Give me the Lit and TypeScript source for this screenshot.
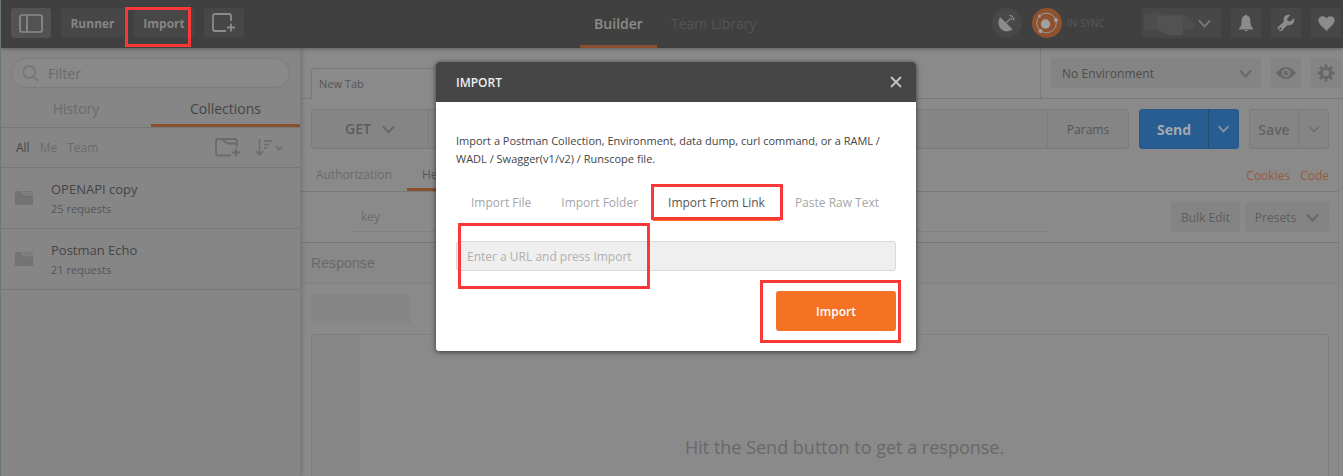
import { LitElement, html, css, svg } from "lit";
import { customElement } from "lit/decorators.js";

const chevron = (w: number, h: number, sw = 2) => html`<svg class="chev" width=${w} height=${h} viewBox="0 0 12 8" fill="none" stroke="currentColor" stroke-width=${sw}><path d="M.8 1.2L6 6.6L11.200 1.2" /></svg>`;

const folder = html`<svg width="18" height="14" viewBox="0 0 18 14" fill="#737373"><path d="M0 0H5.500L9 4.300H18V14H0Z" /><path d="M7.300 0H18V1H8.100ZM8.500 1.700H18V3.300H9.800Z" fill="#777" /></svg>`;

const gearTeeth = [0, 45, 90, 135, 180, 225, 270, 315];

@customElement("app-root")
export class AppRoot extends LitElement {
  static styles = css`
    :host { display: block; width: 1343px; height: 476px; overflow: hidden; position: relative; font-family: "Open Sans", sans-serif; font-size: 12px; color: #494949; background: #8a8a8a; border-left: 1px solid #6b7a70; box-sizing: border-box; }
    * { box-sizing: border-box; }
    svg { display: block; flex: none; }
    .t { white-space: nowrap; line-height: 20px; flex: none; }
    .app { display: flex; flex-direction: column; height: 476px; }
    .top { height: 48px; flex: none; display: flex; background: #404040; padding: 8px 0 0 10px; box-shadow: 0 1px 4px #0000004d; position: relative; z-index: 1; color: #8b8b8b; }
    .hb { height: 30px; border-radius: 3px; background: #474747; display: flex; align-items: center; justify-content: center; margin-right: 10px; flex: none; font-size: 12px; font-weight: 700; color: #858585; }
    .hb .t { padding-top: 1px; }
    .w40 { width: 40px; } .w30 { width: 30px; } .w60 { width: 60px; } .w63 { width: 63px; }
    .on { background: #525252; }
    .tabs { display: flex; margin: 0 0 0 326px; height: 40px; flex: none; }
    .tab { width: 77px; height: 40px; border-bottom: 3px solid #8a4f2f; text-align: center; font-size: 14px; font-weight: 600; line-height: 32px; }
    .lib { font-size: 14px; line-height: 32px; color: #545454; margin-left: 14px; width: 92px; white-space: nowrap; }
    .status { display: flex; align-items: center; height: 30px; margin-left: 229px; width: 150px; flex: none; }
    .sync { font-size: 10px; color: #585858; margin-left: 5px; }
    .circ { margin-right: 10px; }
    .user { width: 79px; padding: 0 10px 0 2px; justify-content: space-between; }
    .user .chev { color: #777; }
    .body { display: flex; flex: 1; min-height: 0; }
    .side { width: 300px; flex: none; background: #868686; border-right: 1px solid #7c7c7c; box-shadow: 0 0 5px #00000040; position: relative; }
    .filter { margin: 10px 10px 0; width: 279px; height: 30px; border: 1px solid #7c7c7c; border-radius: 15px; background: #898989; display: flex; align-items: center; padding-left: 10px; gap: 9px; font-size: 14px; color: #6b6b6b; }
    .filter .t { padding-top: 2px; }
    .stabs { display: flex; height: 40px; border-bottom: 1px solid #787878; font-size: 14px; text-align: center; color: #6b6b6b; line-height: 41px; }
    .stabs div { width: 150px; height: 39px; }
    .stabs .cur { color: #454545; border-bottom: 3px solid #8a4f2f; width: 149px; }
    .scope { display: flex; align-items: center; height: 40px; border-bottom: 1px solid #787878; padding-left: 15px; color: #6b6b6b; }
    .dark { color: #454545; }
    .scope .t { margin-right: 10px; padding-top: 1px; }
    .newf { margin-left: 107px; margin-right: 14px; }
    .item { height: 61px; border-bottom: 1px solid #787878; display: flex; padding: 11px 0 0 14px; gap: 18px; }
    .item svg { margin-top: 12px; }
    .name { font-size: 13px; line-height: 20px; color: #454545; }
    .cnt { font-size: 11px; line-height: 20px; color: #555; }
    .main { flex: 1; min-width: 0; display: flex; flex-direction: column; background: #8a8a8a; }
    .strip { height: 51px; display: flex; border-bottom: 1px solid #797979; flex: none; }
    .ntab { margin: 20px 0 -1px 10px; width: 200px; height: 31px; border: 1px solid #797979; border-bottom: 0; border-radius: 3px 3px 0 0; background: #8a8a8a; padding: 7px 7px; font-size: 11px; color: #555; }
    .env { margin-left: auto; width: 303px; border-left: 1px solid #797979; display: flex; padding: 10px 0 0 10px; flex: none; }
    .soft { background: #848484; border-radius: 3px; display: flex; align-items: center; justify-content: center; height: 30px; margin-right: 10px; flex: none; color: #6a6a6a; }
    .soft .chev, .grp .chev { color: #686868; }
    .sel { width: 210px; justify-content: space-between; padding: 0 9px 0 11px; font-size: 12px; color: #4d4d4d; }
    .sel .t { padding-top: 1px; letter-spacing: .05px; }
    .pane { width: 1038px; border-right: 1px solid #828282; flex: 1; display: flex; flex-direction: column; }
    .req { display: flex; padding: 10px 0 0 10px; height: 50px; flex: none; }
    .grp { display: flex; height: 40px; border: 1px solid #7b7b7b; border-radius: 3px; background: #858585; margin-right: 10px; flex: none; }
    .cell { display: flex; align-items: center; justify-content: center; flex: none; }
    .bl { border-left: 1px solid #7b7b7b; }
    .get { width: 116px; font-size: 14px; font-weight: 600; color: #5d5d5d; gap: 11px; }
    .url { width: 619px; } .par { width: 81px; color: #555; }
    .grp.blue { background: #285d92; border-color: #28588a; color: #a3a9b0; }
    .grp.blue .chev { color: #8a949e; }
    .snd { width: 68px; font-size: 14px; font-weight: 700; }
    .grp .da { width: 30px; border-color: #22496f; }
    .da2 { width: 30px; }
    .sv { width: 48px; font-size: 14px; font-weight: 600; color: #626262; }
    .rt { display: flex; height: 43px; border-bottom: 1px solid #797979; padding: 16px 9px 0 15px; color: #6b6b6b; flex: none; }
    .hd { margin-left: 15px; padding-left: 15px; width: 90px; height: 26px; border-bottom: 3px solid #8a4f2f; color: #555; }
    .lnk { color: #985c3b; margin-left: 10px; line-height: 20px; padding-top: 1px; }
    .push { margin-left: auto; }
    .kv { display: flex; height: 51px; border-bottom: 1px solid #757575; padding: 10px 0 0 50px; flex: none; }
    .key { width: 699px; height: 30px; border-bottom: 1px solid #7f7f7f; padding: 6px 10px; color: #6b6b6b; flex: none; }
    .bulk { margin-left: 121px; width: 69px; margin-right: 5px; color: #5d5d5d; }
    .pre { width: 84px; gap: 10px; color: #5d5d5d; margin-right: 0; }
    .resp { height: 41px; border-bottom: 1px solid #818181; padding: 10px; font: 14px/20px "Liberation Sans", sans-serif; letter-spacing: .1px; color: #686868; background: #888; flex: none; }
    .chip { width: 100px; height: 30px; border-radius: 3px; background: #868686; margin: 10px 0 10px 10px; flex: none; }
    .out { margin-left: 10px; width: 1018px; border: 1px solid #7f7f7f; border-bottom: 0; border-radius: 3px 3px 0 0; flex: 1; display: flex; }
    .gut { width: 48px; background: #878787; flex: none; }
    .hit { flex: 1; font-size: 18px; color: #686868; padding: 100px 0 0 325px; line-height: 24px; white-space: nowrap; }
    .modal { position: absolute; z-index: 2; left: 435px; top: 62px; width: 480px; height: 289px; background: #fff; border-radius: 3px; box-shadow: 0 1px 5px #000000a0; overflow: hidden; }
    .mh { height: 40px; background: #464646; display: flex; align-items: center; justify-content: space-between; padding: 0 14px 0 20px; color: #f0f0f0; font-weight: 600; font-size: 12px; }
    .mb { padding: 30px 20px 0; color: #444; }
    .copy { font-size: 11px; line-height: 18px; white-space: nowrap; }
    .mt { display: flex; margin-top: 14px; height: 39px; color: #a6a6a6; font-size: 12px; }
    .mt div { padding: 11px 15px 0; height: 39px; line-height: 20px; white-space: nowrap; }
    .mt .sel2 { color: #555; border-bottom: 3px solid #f47023; }
    .inp { height: 30px; margin-top: 20px; border: 1px solid #d9d9d9; border-radius: 3px; background: #efefef; color: #b0b0b0; padding: 5px 10px; line-height: 20px; font-size: 12px; }
    .go { margin: 20px 0 0 auto; width: 120px; height: 40px; border-radius: 3px; background: #f57123; color: #fff; font-weight: 600; display: flex; align-items: center; justify-content: center; }
    .mark { position: absolute; z-index: 3; border: 3px solid #fb3838; }
    .m1 { left: 124px; top: 7px; width: 66px; height: 40px; }
    .m2 { left: 650px; top: 184px; width: 132px; height: 36px; }
    .m3 { left: 457px; top: 223px; width: 192px; height: 66px; }
    .m4 { left: 759px; top: 280px; width: 141px; height: 63px; }
  `;

  header() {
    return html`<div class="top">
      <div class="hb w40 on"><svg width="24" height="19" viewBox="0 0 24 19" fill="none" stroke="#8b8b8b" stroke-width="1.7"><rect x="1" y="1" width="22" height="17" rx="2" /><path d="M8 1V18" /></svg></div>
      <div class="hb w63"><span class="t">Runner</span></div>
      <div class="hb w60"><span class="t">Import</span></div>
      <div class="hb w40"><svg width="24" height="20" viewBox="0 0 24 20" fill="none" stroke="#8b8b8b" stroke-width="1.8"><path d="M14 18H3Q1 18 1 16V3Q1 1 3 1H17Q19 1 19 3V8M19 10.500V18.500M15 14.500H23" /></svg></div>
      <div class="tabs"><div class="tab">Builder</div><div class="lib">Team Library</div></div>
      <div class="status">
        <svg class="circ" width="30" height="30" viewBox="0 0 30 30"><circle cx="15" cy="15" r="15" fill="#484848" /><path d="M8 9C5 14 6.500 20 11 22.500C14 24 18 23.500 20.500 21.200Z" fill="#8b8b8b" /><path d="M14 15L18 11M17 7.500Q22 7.500 22 12.500M18 10Q20 10 20 12" stroke="#8b8b8b" stroke-width="1.2" fill="none" /></svg>
        <svg width="30" height="30" viewBox="0 0 30 30"><circle cx="15" cy="15" r="15" fill="#8f522f" /><circle cx="14.500" cy="15" r="9.800" fill="none" stroke="#999" stroke-width="1" /><circle cx="13.500" cy="16" r="4.700" fill="#a0a0a0" /><circle cx="24" cy="12" r="2" fill="#a0a0a0" /><circle cx="8.500" cy="23" r="2" fill="#a0a0a0" /><circle cx="7.500" cy="8" r="1.500" fill="#a0a0a0" /></svg>
        <span class="t sync">IN SYNC</span>
      </div>
      <div class="hb user"><svg width="53" height="24" viewBox="0 0 53 24"><path d="M0 5Q2 2 8 2Q16 0 19 4H41Q49 8 52 18H39V24Q28 22 22 24L14 19H0Z" fill="#4d4d4d" /><path d="M13 5H39V24H26L13 18Z" fill="#525252" /></svg>${chevron(13, 9, 1.8)}</div>
      <div class="hb w30"><svg width="14" height="18" viewBox="0 0 14 18" fill="#8b8b8b"><path d="M6 1.500Q7 -.5 8 1.500C11.500 2.500 11.500 6 11.500 9Q11.500 12 14 14.500V15.500H0V14.500Q2.500 12 2.500 9C2.500 6 2.500 2.500 6 1.500Z" /><path d="M5 16H9Q7 18.500 5 16Z" /></svg></div>
      <div class="hb w30"><svg width="18" height="18" viewBox="0 0 18 18"><path d="M16.800 4.200L13.300 7.600L10.600 7L10.200 4.500L13.400 1.100C10.500 0 7.300 1.300 6.700 4.300Q6.500 6 7 7.500L1.200 12.800Q0 14.200 1.200 15.300L2.700 16.800Q4 17.700 5.200 16.500L10.500 10.900C14.500 12.300 18.500 8.300 16.800 4.200Z" fill="#8b8b8b" /><circle cx="3.300" cy="14.600" r="1.200" fill="#474747" /></svg></div>
      <div class="hb w30"><svg width="17" height="15" viewBox="0 0 17 15"><path d="M8.500 15C6 12 .3 8.500 .3 4.300C.3 .5 6 -1.500 8.500 2.500C11 -1.500 16.700 .5 16.700 4.300C16.700 8.500 11 12 8.500 15Z" fill="#8b8b8b" /></svg></div>
    </div>`;
  }

  sidebar() {
    return html`<div class="side">
      <div class="filter"><svg width="17" height="17" viewBox="0 0 17 17" fill="none" stroke="#777" stroke-width="1.8"><circle cx="7.300" cy="7" r="6" /><path d="M11.500 11.500L16 16" /></svg><span class="t">Filter</span></div>
      <div class="stabs"><div>History</div><div class="cur">Collections</div></div>
      <div class="scope"><span class="t dark">All</span><span class="t">Me</span><span class="t">Team</span>
        <svg class="newf" width="26" height="19" viewBox="0 0 26 19" fill="none" stroke="#6b6b6b" stroke-width="1.800"><path d="M16 17.500H3Q1 17.500 1 15.500V3Q1 1 3 1H20Q22 1 22 3V9M7 1L12.500 5.500H22M21 10.500V18.500M17 14.500H25" /></svg>
        <svg width="27" height="17" viewBox="0 0 27 17" fill="none" stroke="#6b6b6b" stroke-width="1.500"><path d="M4.500 0V15.500M.8 12L4.500 15.700L8.200 12M9 2H17M9 5.500H14M9 9H12M21 7.500L24 10.500L27 7.500" /></svg>
      </div>
      <div class="item">${folder}<div><div class="name">OPENAPI copy</div><div class="cnt">25 requests</div></div></div>
      <div class="item">${folder}<div><div class="name">Postman Echo</div><div class="cnt">21 requests</div></div></div>
    </div>`;
  }

  content() {
    return html`<div class="main">
      <div class="strip"><div class="ntab">New Tab</div>
        <div class="env"><div class="soft sel"><span class="t">No Environment</span>${chevron(13, 9, 1.8)}</div>
          <div class="soft w30"><svg width="20" height="12" viewBox="0 0 20 12"><path d="M0 6Q10 -6 20 6Q10 18 0 6Z" fill="#686868" /><circle cx="10" cy="6" r="4.200" fill="#848484" /><circle cx="10" cy="6" r="2.500" fill="#686868" /><circle cx="11" cy="5" r=".8" fill="#848484" /></svg></div>
          <div class="soft w30"><svg width="18" height="18" viewBox="-9 -9 18 18" fill="#686868">${gearTeeth.map((a) => svg`<rect x="-1.500" y="-8.500" width="3" height="4" transform="rotate(${a})" />`)}<circle r="4.600" fill="none" stroke="#686868" stroke-width="3" /></svg></div>
        </div></div>
      <div class="pane">
        <div class="req"><div class="grp"><div class="cell get"><span class="t">GET</span>${chevron(13, 9, 1.8)}</div><div class="cell bl url"></div><div class="cell bl par">Params</div></div>
          <div class="grp blue"><div class="cell snd">Send</div><div class="cell bl da">${chevron(11, 8)}</div></div>
          <div class="grp"><div class="cell sv">Save</div><div class="cell bl da2">${chevron(10, 7, 1.5)}</div></div></div>
        <div class="rt"><span class="t">Authorization</span><div class="hd t">Headers</div><span class="lnk push">Cookies</span><span class="lnk">Code</span></div>
        <div class="kv"><div class="key">key</div><div class="soft bulk">Bulk Edit</div><div class="soft pre">Presets ${chevron(13, 9, 2)}</div></div>
        <div class="resp">Response</div>
        <div class="chip"></div>
        <div class="out"><div class="gut"></div><div class="hit">Hit the Send button to get a response.</div></div>
      </div>
    </div>`;
  }

  dialog() {
    return html`<div class="modal"><div class="mh"><span>IMPORT</span><svg width="12" height="12" viewBox="0 0 12 12" stroke="#c4c4c4" stroke-width="1.800"><path d="M1 1L11 11M11 1L1 11" /></svg></div>
      <div class="mb"><div class="copy">Import a Postman Collection, Environment, data dump, curl command, or a RAML /<br />WADL / Swagger(v1/v2) / Runscope file.</div>
        <div class="mt"><div>Import File</div><div>Import Folder</div><div class="sel2">Import From Link</div><div>Paste Raw Text</div></div>
        <div class="inp">Enter a URL and press Import</div>
        <div class="go">Import</div></div></div>`;
  }

  render() {
    return html`<div class="app">${this.header()}<div class="body">${this.sidebar()}${this.content()}</div></div>
      ${this.dialog()}
      <div class="mark m1"></div><div class="mark m2"></div><div class="mark m3"></div><div class="mark m4"></div>`;
  }
}
